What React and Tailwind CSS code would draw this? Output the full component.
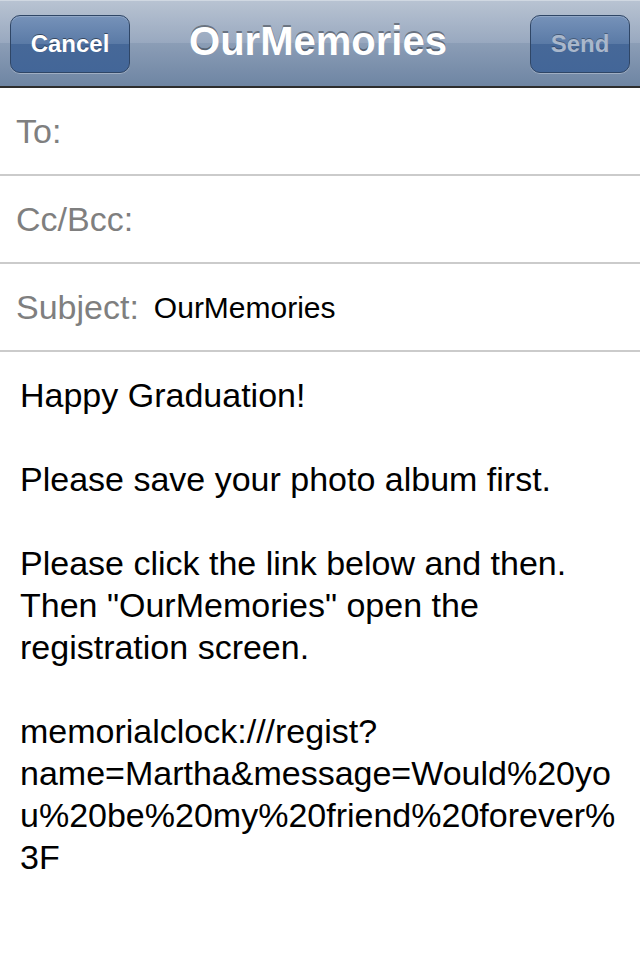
export default function App() {
  const rows = [
    { label: "To:", value: "" },
    { label: "Cc/Bcc:", value: "" },
    { label: "Subject:", value: "OurMemories" },
  ];

  const body = [
    "Happy Graduation!",
    "",
    "Please save your photo album first.",
    "",
    "Please click the link below and then.",
    'Then "OurMemories" open the',
    "registration screen.",
    "",
    "memorialclock:///regist?",
    "name=Martha&message=Would%20yo",
    "u%20be%20my%20friend%20forever%",
    "3F",
  ];

  return (
    <div className="w-[640px] h-[960px] bg-white font-['Liberation_Sans',Arial,sans-serif] overflow-hidden">
      {/* nav bar */}
      <div className="h-[86px] flex items-center justify-between px-[10px] bg-[linear-gradient(to_bottom,#b8c3d2_0%,#98a8bf_50%,#8b9db6_50%,#6e85a3_100%)] border-t border-[#d0d8e2]">
        <button className="w-[120px] h-[58px] rounded-[10px] border border-[#2f4666] bg-[linear-gradient(to_bottom,#7692b9_0%,#5a7aa6_50%,#466898_50%,#436698_100%)] shadow-[inset_0_1px_0_rgba(255,255,255,0.2),0_1px_0_rgba(255,255,255,0.3)] text-white font-bold text-[24px] [text-shadow:0_-1px_0_rgba(0,0,0,0.45)]">
          Cancel
        </button>
        <h1 className="text-white font-bold text-[40px] mb-[6px] -ml-[24px] [text-shadow:0_-2px_0_rgba(0,0,0,0.35)]">
          OurMemories
        </h1>
        <button className="w-[100px] h-[58px] rounded-[10px] border border-[#2f4666] bg-[linear-gradient(to_bottom,#7692b9_0%,#5a7aa6_50%,#466898_50%,#436698_100%)] shadow-[inset_0_1px_0_rgba(255,255,255,0.2),0_1px_0_rgba(255,255,255,0.3)] text-[#a9b7cb] font-bold text-[24px] [text-shadow:0_-1px_0_rgba(0,0,0,0.3)]">
          Send
        </button>
      </div>
      <div className="h-[2px] bg-[#2d2d2d]" />

      {/* header fields */}
      {rows.map((r) => (
        <div
          key={r.label}
          className="h-[88px] flex items-center gap-[15px] px-[16px] border-b-2 border-[#cbcbcb]"
        >
          <span className="text-[34px] text-[#7f7f7f]">{r.label}</span>
          {r.value && <span className="text-[30px] text-black">{r.value}</span>}
        </div>
      ))}

      {/* message body */}
      <div className="pt-[22px] px-[20px] text-[34px] leading-[42px] text-black">
        {body.map((line, i) => (
          <div key={i} className="h-[42px] whitespace-pre">
            {line}
          </div>
        ))}
      </div>
    </div>
  );
}
